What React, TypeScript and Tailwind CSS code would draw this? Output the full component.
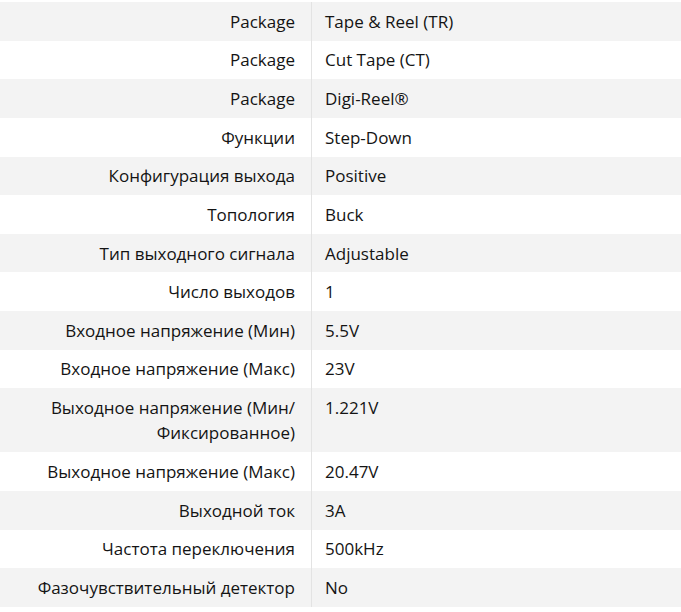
import React from "react";

const rows: [string, string][] = [
  ["Package", "Tape & Reel (TR)"],
  ["Package", "Cut Tape (CT)"],
  ["Package", "Digi-Reel®"],
  ["Функции", "Step-Down"],
  ["Конфигурация выхода", "Positive"],
  ["Топология", "Buck"],
  ["Тип выходного сигнала", "Adjustable"],
  ["Число выходов", "1"],
  ["Входное напряжение (Мин)", "5.5V"],
  ["Входное напряжение (Макс)", "23V"],
  ["Выходное напряжение (Мин/ Фиксированное)", "1.221V"],
  ["Выходное напряжение (Макс)", "20.47V"],
  ["Выходной ток", "3A"],
  ["Частота переключения", "500kHz"],
  ["Фазочувствительный детектор", "No"],
];

export default function App() {
  return (
    <div
      className="w-[681px] h-[612px] bg-white text-[#141414] text-[17px] leading-[25.33px] pt-[2px] overflow-hidden"
      style={{ fontFamily: '"Open Sans", "Noto Sans", sans-serif' }}
    >
      <div className="flex flex-col">
        {rows.map(([label, value], i) => (
          <div
            key={i}
            className={`grid grid-cols-[312px_1fr] ${i % 2 === 0 ? "bg-[#f3f3f3]" : "bg-white"}`}
          >
            <div className="text-right pr-[16px] pl-4 py-[6.67px] border-r border-[#e3e3e3]">
              {label}
            </div>
            <div className="pl-[13px] pr-4 py-[6.67px]">{value}</div>
          </div>
        ))}
      </div>
    </div>
  );
}
